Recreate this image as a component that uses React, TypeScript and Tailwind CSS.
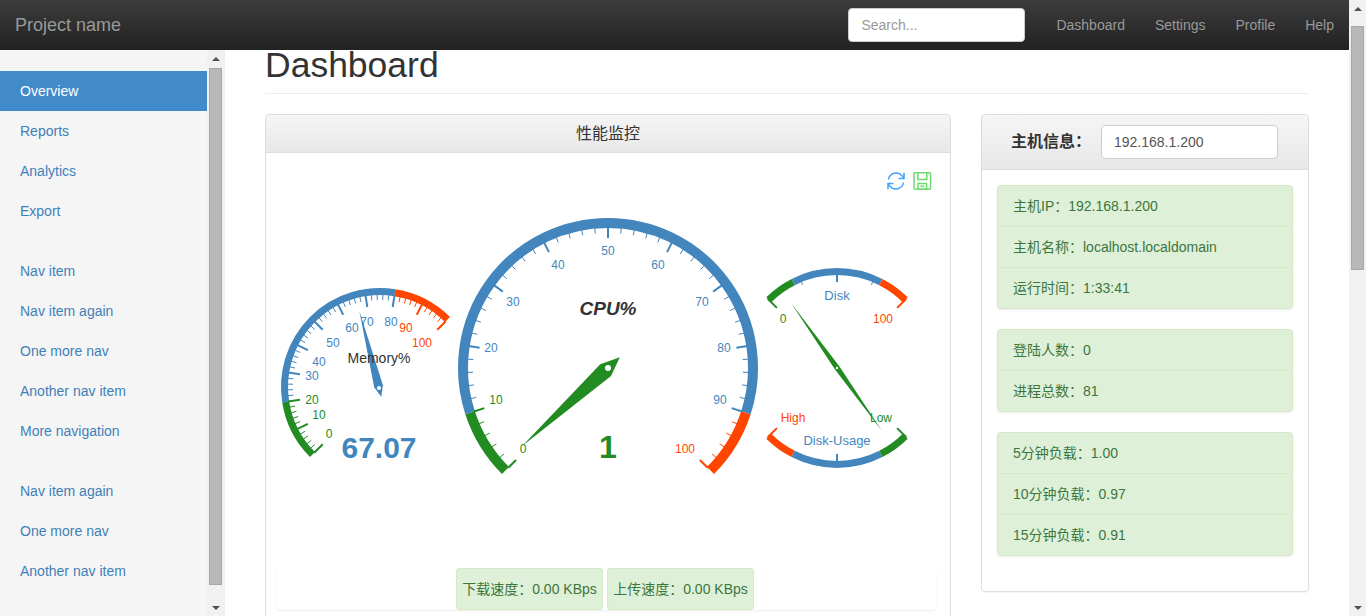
import { FC, ReactNode } from 'react'

const BLUE = '#4286bd'
const GREEN = '#228b22'
const RED = '#ff4500'

const polar = (cx: number, cy: number, r: number, deg: number): [number, number] => {
    const a = (deg * Math.PI) / 180
    return [cx + r * Math.sin(a), cy - r * Math.cos(a)]
}

const arc = (cx: number, cy: number, r: number, from: number, to: number) => {
    const [x1, y1] = polar(cx, cy, r, from)
    const [x2, y2] = polar(cx, cy, r, to)
    const sweep = to > from ? 1 : 0
    const large = Math.abs(to - from) > 180 ? 1 : 0
    return `M${x1} ${y1}A${r} ${r} 0 ${large} ${sweep} ${x2} ${y2}`
}

const colorFor = (v: number, lo: number, hi: number) => (v <= lo ? GREEN : v > hi ? RED : BLUE)

interface DialProps {
    cx: number
    cy: number
    r: number
    band: number
    start: number
    end: number
    lo: number
    hi: number
    majorLen: number
    minorLen: number
    labels: [number, number][]
    value: number
    hub: [number, number]
    tail: number
    needleLen: number
    needleW: number
}

const Dial: FC<DialProps> = ({ cx, cy, r, band, start, end, lo, hi, majorLen, minorLen, labels, value, hub, tail, needleLen, needleW }) => {
    const at = (v: number) => start + ((end - start) * v) / 100
    const inner = r - band
    const ticks: ReactNode[] = []
    for (let i = 0; i <= 10; i++) {
        for (let j = 0; j < (i === 10 ? 1 : 5); j++) {
            const v = i * 10 + j * 2
            const isMajor = j === 0
            const len = isMajor ? majorLen : minorLen
            const [x1, y1] = polar(cx, cy, inner + 1, at(v))
            const [x2, y2] = polar(cx, cy, inner - len, at(v))
            ticks.push(<line key={v} x1={x1} y1={y1} x2={x2} y2={y2} stroke={colorFor(v, lo, hi)} strokeWidth={isMajor ? 2 : 1} />)
        }
    }
    const a = at(value)
    const [hx, hy] = hub
    const tip = polar(hx, hy, needleLen, a)
    const back = polar(hx, hy, -tail, a)
    const [bx, by] = polar(hx, hy, tail * 0.2, a)
    const l = polar(bx, by, needleW / 2, a - 90)
    const rr = polar(bx, by, needleW / 2, a + 90)
    const color = colorFor(value, lo, hi)
    return (
        <g>
            <path d={arc(cx, cy, r - band / 2, at(0), at(lo))} fill="none" stroke={GREEN} strokeWidth={band} />
            <path d={arc(cx, cy, r - band / 2, at(lo), at(hi))} fill="none" stroke={BLUE} strokeWidth={band} />
            <path d={arc(cx, cy, r - band / 2, at(hi), at(100))} fill="none" stroke={RED} strokeWidth={band} />
            {ticks}
            {labels.map(([x, y], i) => (
                <text key={i} x={x} y={y + 4} textAnchor="middle" fontSize="12" fill={colorFor(i * 10, lo, hi)}>
                    {i * 10}
                </text>
            ))}
            <polygon points={[tip, l, back, rr].map((p) => p.join(',')).join(' ')} fill={color} />
            <circle cx={hx} cy={hy} r={needleW > 10 ? 3 : 2} fill="#fff" />
        </g>
    )
}

const DiskDial: FC = () => {
    const cx = 837
    const cy = 368
    const r = 100
    const band = 7
    const mid = r - band / 2
    const endTick = (deg: number, color: string) => {
        const [x1, y1] = polar(cx, cy, r - 2, deg)
        const [x2, y2] = polar(cx, cy, r - 15, deg)
        return <line x1={x1} y1={y1} x2={x2} y2={y2} stroke={color} strokeWidth={2} />
    }
    const tick = (deg: number, len: number, color: string, w: number) => {
        const [x1, y1] = polar(cx, cy, r - band, deg)
        const [x2, y2] = polar(cx, cy, r - band - len, deg)
        return <line key={deg} x1={x1} y1={y1} x2={x2} y2={y2} stroke={color} strokeWidth={w} />
    }
    return (
        <g>
            <path d={arc(cx, cy, mid, -45, -27)} fill="none" stroke={GREEN} strokeWidth={band} />
            <path d={arc(cx, cy, mid, -27, 27)} fill="none" stroke={BLUE} strokeWidth={band} />
            <path d={arc(cx, cy, mid, 27, 45)} fill="none" stroke={RED} strokeWidth={band} />
            <path d={arc(cx, cy, mid, 225, 207)} fill="none" stroke={RED} strokeWidth={band} />
            <path d={arc(cx, cy, mid, 207, 153)} fill="none" stroke={BLUE} strokeWidth={band} />
            <path d={arc(cx, cy, mid, 153, 135)} fill="none" stroke={GREEN} strokeWidth={band} />
            {endTick(-45, GREEN)}
            {endTick(45, RED)}
            {endTick(225, RED)}
            {endTick(135, GREEN)}
            {tick(0, 7, BLUE, 2)}
            {tick(-22.5, 3, BLUE, 1)}
            {tick(22.5, 3, BLUE, 1)}
            {tick(180, 7, BLUE, 2)}
            <text x={837} y={300} textAnchor="middle" fontSize="13" fill={BLUE}>Disk</text>
            <text x={783} y={323} textAnchor="middle" fontSize="12" fill={GREEN}>0</text>
            <text x={883} y={323} textAnchor="middle" fontSize="12" fill={RED}>100</text>
            <text x={793} y={422} textAnchor="middle" fontSize="12" fill={RED}>High</text>
            <text x={881} y={422} textAnchor="middle" fontSize="12" fill={GREEN}>Low</text>
            <text x={837} y={445} textAnchor="middle" fontSize="13" fill={BLUE}>Disk-Usage</text>
            <polygon points="791,303 835,369.5 839.5,366.5" fill={GREEN} />
            <polygon points="882,431 835,369.5 839.5,366.5" fill={GREEN} />
            <circle cx={837} cy={368} r={1.2} fill="#fff" />
        </g>
    )
}

const MEM_LABELS: [number, number][] = [[329, 434], [319, 415], [312, 400], [312, 376], [319, 362], [333, 343], [352, 328], [367, 322], [391, 322], [406, 328], [422, 343]]
const CPU_LABELS: [number, number][] = [[523, 449], [496, 400], [491, 348], [513, 302], [558, 265], [608, 251], [658, 265], [702, 302], [724, 348], [720, 400], [685, 449]]

const Gauges: FC = () => (
    <svg viewBox="266 153 684 415" className="block w-[684px] h-[415px]" fontFamily="'Liberation Sans', Arial, sans-serif">
        {/* toolbox icons */}
        <g fill="none" stroke="#1e90ff" strokeWidth="1.5" opacity="0.85">
            <path d="M888.5 179.5a7.7 7.7 0 0 1 13.6-3.6l1.6 2" />
            <path d="M904 172.8v5.6h-5.4" />
            <path d="M903.5 182.5a7.7 7.7 0 0 1-13.6 3.6l-1.6-2" />
            <path d="M888 189.2v-5.6h5.4" />
        </g>
        <g fill="none" stroke="#32cd32" strokeWidth="1.5" opacity="0.7">
            <rect x="914" y="172.7" width="16.6" height="16.6" rx="1" />
            <path d="M917.8 172.7v6.8h9v-6.8" />
            <rect x="918" y="183.5" width="8.6" height="5.8" />
            <path d="M920.3 186.3h4" />
        </g>
        <Dial cx={380} cy={387} r={99} band={7} start={-135} end={45} lo={20} hi={80} majorLen={11} minorLen={5} labels={MEM_LABELS} value={67.07} hub={[379, 388]} tail={9} needleLen={80} needleW={9} />
        <text x={379} y={363} textAnchor="middle" fontSize="14" fill="#333">Memory%</text>
        <text x={379} y={458} textAnchor="middle" fontSize="30" fontWeight="bold" fill={BLUE}>67.07</text>
        <Dial cx={608} cy={368} r={150} band={10} start={-135} end={135} lo={10} hi={90} majorLen={10} minorLen={5} labels={CPU_LABELS} value={1} hub={[608, 368]} tail={16} needleLen={116} needleW={16} />
        <text x={608} y={315} textAnchor="middle" fontSize="19" fontWeight="bold" fontStyle="italic" fill="#333">CPU%</text>
        <text x={608} y={458} textAnchor="middle" fontSize="32" fontWeight="bold" fill={GREEN}>1</text>
        <DiskDial />
    </svg>
)

const Scrollbar: FC<{ thumbTop: string; thumbH: string }> = ({ thumbTop, thumbH }) => (
    <div className="w-[17px] shrink-0 h-full bg-[#f1f1f1] flex flex-col items-center">
        <div className="h-[17px] shrink-0 flex items-center justify-center">
            <div className="w-0 h-0 border-x-[4px] border-x-transparent border-b-[4px] border-b-[#505050]" />
        </div>
        <div className="flex-1 w-full px-[2px] flex flex-col">
            <div className={thumbTop} />
            <div className={`${thumbH} bg-[#b8b8b8] border border-[#a8a8a8]`} />
        </div>
        <div className="h-[17px] shrink-0 flex items-center justify-center">
            <div className="w-0 h-0 border-x-[4px] border-x-transparent border-t-[4px] border-t-[#505050]" />
        </div>
    </div>
)

const NAV_GROUPS = [
    ['Overview', 'Reports', 'Analytics', 'Export'],
    ['Nav item', 'Nav item again', 'One more nav', 'Another nav item', 'More navigation'],
    ['Nav item again', 'One more nav', 'Another nav item'],
]

const Sidebar: FC = () => (
    <div className="w-[225px] shrink-0 h-full bg-[#f5f5f5] border-r border-[#eee] flex overflow-hidden">
        <div className="w-[207px] pt-[21px] flex flex-col gap-[20px]">
            {NAV_GROUPS.map((group, i) => (
                <ul key={i}>
                    {group.map((item) => (
                        <li
                            key={item}
                            className={`h-[40px] px-5 flex items-center text-[14px] ${item === 'Overview' ? 'bg-[#428bca] text-white' : 'text-[#3f80b8]'}`}
                        >
                            {item}
                        </li>
                    ))}
                </ul>
            ))}
        </div>
        <Scrollbar thumbTop="h-[1px]" thumbH="h-[517px]" />
    </div>
)

const ListGroup: FC<{ rows: string[] }> = ({ rows }) => (
    <ul className="rounded-[4px] border border-[#d6e9c6] bg-[#dff0d8] text-[#3c763d] shadow-[0_1px_2px_rgba(0,0,0,0.08)]">
        {rows.map((row, i) => (
            <li key={row} className={`px-[15px] flex items-center text-[14px] ${i > 0 ? 'h-[41px] border-t border-[#d6e9c6]' : 'h-[40px]'}`}>
                {row}
            </li>
        ))}
    </ul>
)

const Navbar: FC = () => (
    <div className="h-[50px] shrink-0 bg-gradient-to-b from-[#3c3c3c] to-[#222] flex items-center text-[#999]">
        <span className="ml-[15px] text-[18px]">Project name</span>
        <div className="ml-auto flex items-center">
            <input
                placeholder="Search..."
                className="w-[177px] h-[34px] mr-[16px] px-3 bg-white border border-[#ccc] rounded-[4px] text-[14px] placeholder:text-[#999]"
            />
            {['Dashboard', 'Settings', 'Profile', 'Help'].map((link) => (
                <span key={link} className="px-[15px] text-[14px]">
                    {link}
                </span>
            ))}
        </div>
    </div>
)

const App: FC = () => (
    <div className="w-[1366px] h-[616px] overflow-hidden flex bg-white text-[#333] font-['Liberation_Sans','Noto_Sans_CJK_SC',sans-serif]">
        <div className="w-[1349px] flex flex-col">
            <Navbar />
            <div className="flex-1 min-h-0 flex">
                <Sidebar />
                <div className="flex-1 min-w-0 px-[40px] overflow-hidden">
                    <h1 className="-mt-[5px] h-[49px] pb-2 border-b border-[#eee] text-[35.5px] leading-[40px]">Dashboard</h1>
                    <div className="mt-[20px] flex gap-[30px] items-start">
                        <div className="w-[686px] shrink-0 border border-[#ddd] rounded-t-[4px] pb-[20px]">
                            <div className="h-[38px] bg-gradient-to-b from-[#f5f5f5] to-[#e8e8e8] border-b border-[#ddd] rounded-t-[4px] flex items-center justify-center text-[16px]">
                                性能监控
                            </div>
                            <Gauges />
                            <div className="ml-[10px] mr-[14px] pr-[2px] h-[42px] rounded-[4px] shadow-[0_1px_2px_rgba(0,0,0,0.08)] flex justify-center gap-[4px] text-[14px]">
                                {['下载速度：0.00 KBps', '上传速度：0.00 KBps'].map((s) => (
                                    <div key={s} className="w-[147px] flex items-center justify-center rounded-[3px] border border-[#d6e9c6] bg-[#dff0d8] text-[#3c763d]">
                                        {s}
                                    </div>
                                ))}
                            </div>
                        </div>
                        <div className="w-[328px] shrink-0 h-[478px] border border-[#ddd] rounded-[4px] shadow-[0_1px_1px_rgba(0,0,0,0.05)]">
                            <div className="h-[55px] pl-[29px] bg-gradient-to-b from-[#f5f5f5] to-[#e8e8e8] border-b border-[#ddd] rounded-t-[4px] flex items-center">
                                <span className="w-[90px] text-[16px] font-bold">主机信息：</span>
                                <input
                                    defaultValue="192.168.1.200"
                                    className="w-[177px] h-[34px] px-3 bg-white border border-[#ccc] rounded-[4px] text-[14px] text-[#555]"
                                />
                            </div>
                            <div className="px-[15px] pt-[15px] flex flex-col gap-[20px]">
                                <ListGroup rows={['主机IP：192.168.1.200', '主机名称：localhost.localdomain', '运行时间：1:33:41']} />
                                <ListGroup rows={['登陆人数：0', '进程总数：81']} />
                                <ListGroup rows={['5分钟负载：1.00', '10分钟负载：0.97', '15分钟负载：0.91']} />
                            </div>
                        </div>
                    </div>
                </div>
            </div>
        </div>
        <Scrollbar thumbTop="h-[9px]" thumbH="h-[244px]" />
    </div>
)

export default App
